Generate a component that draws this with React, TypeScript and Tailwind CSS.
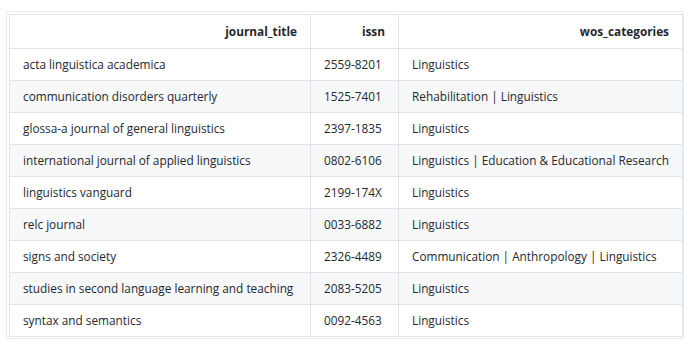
import React from "react";

const rows = [
  ["acta linguistica academica", "2559-8201", "Linguistics"],
  ["communication disorders quarterly", "1525-7401", "Rehabilitation | Linguistics"],
  ["glossa-a journal of general linguistics", "2397-1835", "Linguistics"],
  ["international journal of applied linguistics", "0802-6106", "Linguistics | Education & Educational Research"],
  ["linguistics vanguard", "2199-174X", "Linguistics"],
  ["relc journal", "0033-6882", "Linguistics"],
  ["signs and society", "2326-4489", "Communication | Anthropology | Linguistics"],
  ["studies in second language learning and teaching", "2083-5205", "Linguistics"],
  ["syntax and semantics", "0092-4563", "Linguistics"],
];

export default function App() {
  return (
    <div className="w-[693px] h-[355px] bg-white pl-[6px] pt-[11px]" style={{ fontFamily: '"Open Sans", "Noto Sans", sans-serif' }}>
      <div className="w-[678px] h-[328px] border border-[#ececec] p-[2px]">
        <table className="table-fixed border-collapse w-[673px] text-[11.8px] text-[#24292e]">
          <colgroup>
            <col className="w-[301px]" />
            <col className="w-[88px]" />
            <col className="w-[284px]" />
          </colgroup>
          <thead>
            <tr className="h-[34px]">
              <th className="border border-[#e1e4e8] text-right font-bold px-[13px]">journal_title</th>
              <th className="border border-[#e1e4e8] text-right font-bold px-[13px]">issn</th>
              <th className="border border-[#e1e4e8] text-right font-bold px-[13px]">wos_categories</th>
            </tr>
          </thead>
          <tbody>
            {rows.map((r, i) => (
              <tr key={i} className={i % 2 === 1 ? "h-[32px] bg-[#f6f8fa]" : "h-[32px] bg-white"}>
                <td className="border border-[#e1e4e8] px-[13px] whitespace-nowrap">{r[0]}</td>
                <td className="border border-[#e1e4e8] px-[13px] whitespace-nowrap">{r[1]}</td>
                <td className="border border-[#e1e4e8] px-[13px] whitespace-nowrap">{r[2]}</td>
              </tr>
            ))}
          </tbody>
        </table>
      </div>
    </div>
  );
}
